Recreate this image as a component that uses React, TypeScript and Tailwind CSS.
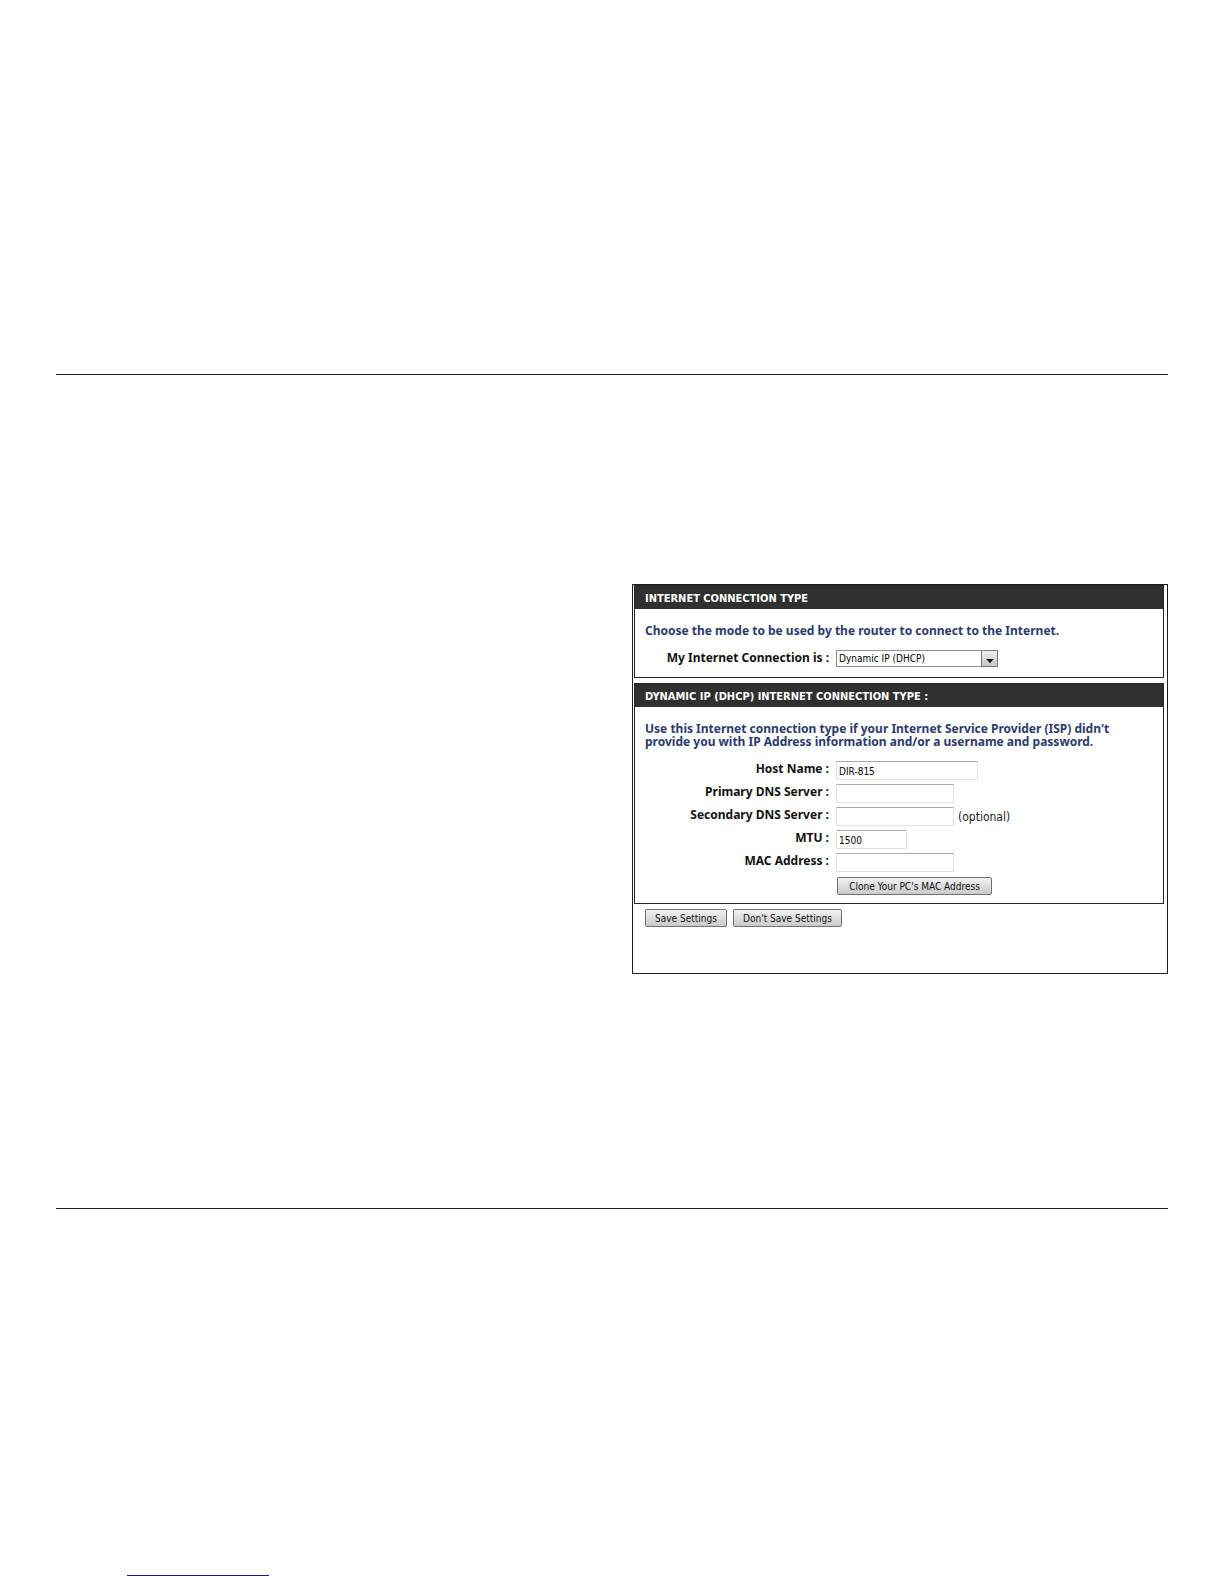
import type { ReactNode } from "react";

function Panel({ title, children }: { title: string; children: ReactNode }) {
  return (
    <section className="border border-[#262626]">
      <h2 className="flex h-[23px] items-center bg-[#303030] px-2.5 pt-0.5 font-['DejaVu_Sans_Condensed','DejaVu_Sans',sans-serif] text-[11px] leading-4 font-bold text-white">
        {title}
      </h2>
      <div className="px-2.5 pt-[15px]">{children}</div>
    </section>
  );
}

function Row({ id, label, children }: { id: string; label: string; children: ReactNode }) {
  return (
    <div className="grid grid-cols-[184px_1fr] items-start gap-[7px]">
      <label htmlFor={id} className="text-right text-[12px] leading-4 font-bold text-[#111111]">
        {label}
      </label>
      <div className="flex items-center gap-1">{children}</div>
    </div>
  );
}

const field =
  "h-[19px] border border-[#dde1e6] border-t-[#a5a8ad] bg-white px-0.5 pt-0.5 font-['DejaVu_Sans_Condensed','DejaVu_Sans',sans-serif] text-[10px] leading-4 text-black outline-none";

const button =
  "h-[18px] rounded-[2px] border border-[#707070] bg-linear-to-b from-[#f2f2f2] via-[#dddddd] to-[#cbcbcb] pt-0.5 text-center font-['DejaVu_Sans_Condensed','DejaVu_Sans',sans-serif] text-[10px] leading-[14px] text-[#111111]";

export default function App() {
  return (
    <div className="min-h-screen bg-white px-14 pt-[374px] font-['Noto_Sans',sans-serif]">
      <main className="border-y border-[#1e1e1e] pt-[209px] pb-[234px]">
        <form
          className="ml-auto w-full max-w-[536px] border border-[#1e1e1e] pr-[3px] pb-[46px] pl-px"
          onSubmit={(e) => e.preventDefault()}
        >
          <Panel title="INTERNET CONNECTION TYPE">
            <p className="text-[12px] leading-[13px] font-bold text-[#2c3a6c]">
              Choose the mode to be used by the router to connect to the Internet.
            </p>
            <div className="pt-[13px] pb-2.5">
              <Row id="mode" label="My Internet Connection is :">
                <div className="relative h-[17px] w-[162px]">
                  <select
                    id="mode"
                    className="block h-full w-full appearance-none border border-[#8e8f92] bg-white px-0.5 font-['DejaVu_Sans_Condensed','DejaVu_Sans',sans-serif] text-[10px] leading-4 text-black outline-none"
                  >
                    <option>Dynamic IP (DHCP)</option>
                  </select>
                  <span className="pointer-events-none absolute inset-y-0 right-0 flex w-[17px] items-end justify-center border border-[#77797d] bg-linear-to-b from-[#f0f0f0] to-[#c6c6c8] pb-[3px]">
                    <svg width="8" height="4" viewBox="0 0 8 4" aria-hidden="true">
                      <path d="M0 0h8L4 4z" fill="#111" />
                    </svg>
                  </span>
                </div>
              </Row>
            </div>
          </Panel>

          <div className="pt-[5px]">
            <Panel title="DYNAMIC IP (DHCP) INTERNET CONNECTION TYPE :">
              <p className="pr-5 text-[12px] leading-[13px] font-bold text-[#2c3a6c]">
                Use this Internet connection type if your Internet Service Provider (ISP) didn't provide you with IP
                Address information and/or a username and password.
              </p>
              <div className="flex flex-col gap-1 pt-[13px]">
                <Row id="host" label="Host Name :">
                  <input id="host" type="text" defaultValue="DIR-815" className={`${field} w-[142px]`} />
                </Row>
                <Row id="dns1" label="Primary DNS Server :">
                  <input id="dns1" type="text" className={`${field} w-[118px]`} />
                </Row>
                <Row id="dns2" label="Secondary DNS Server :">
                  <input id="dns2" type="text" className={`${field} w-[118px]`} />
                  <span className="font-['DejaVu_Sans_Condensed','DejaVu_Sans',sans-serif] text-[12px] leading-4 text-[#1c1c1c]">
                    (optional)
                  </span>
                </Row>
                <Row id="mtu" label="MTU :">
                  <input id="mtu" type="text" defaultValue="1500" className={`${field} w-[71px]`} />
                </Row>
                <Row id="mac" label="MAC Address :">
                  <input id="mac" type="text" className={`${field} w-[118px]`} />
                </Row>
              </div>
              <div className="pt-[5px] pb-2 pl-48">
                <button type="button" className={`${button} block w-[155px]`}>
                  Clone Your PC's MAC Address
                </button>
              </div>
            </Panel>
          </div>

          <div className="flex gap-1.5 pt-[5px] pl-[11px]">
            <button type="submit" className={`${button} w-[82px]`}>
              Save Settings
            </button>
            <button type="reset" className={`${button} w-[109px]`}>
              Don't Save Settings
            </button>
          </div>
        </form>
      </main>
      <footer className="pt-[366px] pb-2 pl-[71px]">
        <a href="#" aria-label="Footer link" className="block w-[142px] border-b border-[#17178a]" />
      </footer>
    </div>
  );
}
